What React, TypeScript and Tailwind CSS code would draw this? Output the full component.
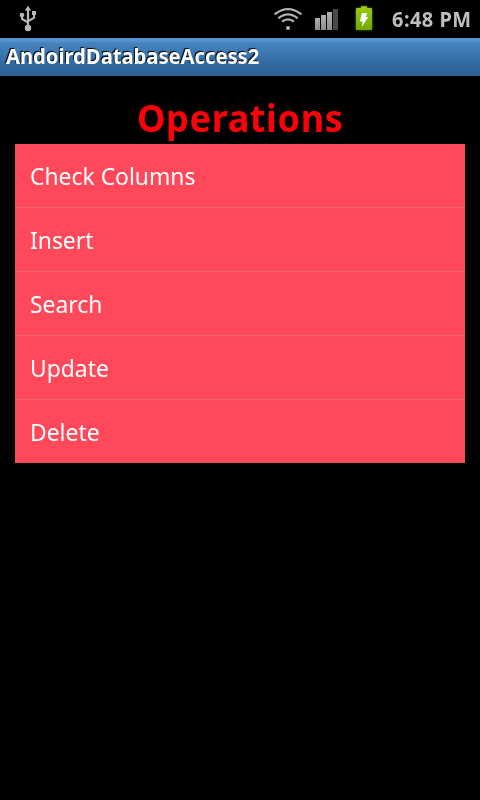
const items = ["Check Columns", "Insert", "Search", "Update", "Delete"];

function UsbIcon() {
  return (
    <svg className="ml-[18px] h-[38px] w-[20px]" viewBox="18 0 20 38" fill="none">
      <path d="M28 5.8L31.3 10.4H29.1V26H26.9V10.4H24.7Z" fill="#b8b8b8" />
      <path d="M22 15V18.8L28 22.4M34 13V17.8L28 21.2" stroke="#b8b8b8" strokeWidth="2.1" />
      <circle cx="22" cy="15" r="2.3" fill="#b8b8b8" />
      <rect x="32" y="11" width="4" height="4" fill="#b8b8b8" />
      <circle cx="28" cy="28" r="3.2" fill="#b8b8b8" />
    </svg>
  );
}

function WifiIcon() {
  return (
    <svg className="h-[38px] w-[30px]" viewBox="273 0 30 38" fill="none" stroke="#b0b0b0">
      <path d="M274.6 14.4Q281 9.1 288 9.1Q295 9.1 301.4 14.4" strokeWidth="2.3" />
      <path d="M278.3 18.3Q283 14.3 288 14.3Q293 14.3 297.7 18.3" strokeWidth="2.3" />
      <path d="M282 21.7Q285 19.3 288 19.3Q291 19.3 294 21.7" strokeWidth="2.3" />
      <circle cx="288" cy="28" r="2" fill="#b8b8b8" stroke="none" />
    </svg>
  );
}

function SignalIcon() {
  return (
    <svg className="ml-[11px] h-[38px] w-[26px]" viewBox="314 0 26 38">
      <defs>
        <linearGradient id="bar" x1="0" y1="0" x2="0" y2="1">
          <stop stopColor="#b2b2b2" />
          <stop offset="1" stopColor="#8c8c8c" />
        </linearGradient>
      </defs>
      <path d="M315 18h5v12h-5z" fill="url(#bar)" />
      <path d="M321 15h5v15h-5z" fill="url(#bar)" />
      <path d="M327 12h5v18h-5z" fill="url(#bar)" />
      <path d="M333 9h5v21h-5z" fill="#484848" />
    </svg>
  );
}

function BatteryIcon() {
  return (
    <svg className="ml-[15px] h-[38px] w-[18px] overflow-visible drop-shadow-[0_0_1px_#5c8a00]" viewBox="355 0 18 38">
      <defs>
        <linearGradient id="battery" x1="0" y1="0" x2="0" y2="1">
          <stop stopColor="#9ccb16" />
          <stop offset="1" stopColor="#71a800" />
        </linearGradient>
      </defs>
      <path d="M361 8V7Q361 6.3 361.7 6.3H366.3Q367 6.3 367 7V8H371Q372 8 372 9V29Q372 30 371 30H357Q356 30 356 29V9Q356 8 357 8Z" fill="url(#battery)" />
      <path d="M362 13H367.3L365.6 17H368.3L361.6 27.3L362.8 21.4H359.8Z" fill="#fff" />
    </svg>
  );
}

export default function App() {
  return (
    <div className="h-[800px] w-[480px] overflow-hidden bg-black font-['Noto_Sans',sans-serif]">
      <div className="flex h-[38px] items-center pr-[9px] text-[#bebebe]">
        <UsbIcon />
        <div className="flex-1" />
        <WifiIcon />
        <SignalIcon />
        <BatteryIcon />
        <span className="ml-[19px] w-[79px] origin-left scale-x-[0.95] text-[21px] leading-[38px] font-bold tracking-[0.5px] whitespace-nowrap">6:48 PM</span>
      </div>
      <header className="flex h-[38px] items-center bg-[linear-gradient(#5897d4_0px,#5592ce_3px,#4684bf_5px,#3169a0_26px,#2d6090_38px)] pl-[6px] text-[21px] font-bold text-white">
        <span className="origin-left scale-x-[0.961] [text-shadow:-1px_-1px_1px_#000]">AndoirdDatabaseAccess2</span>
      </header>
      <main className="px-[15px] pt-[16px]">
        <h1 className="h-[52px] text-center text-[37.5px] leading-[52px] font-bold tracking-[0.6px] text-[#ff0008]">
          <span className="inline-block scale-x-[0.963]">Operations</span>
        </h1>
        <ul>
          {items.map((t) => (
            <li key={t} className="h-[64px] border-b border-[#ec6871] bg-[#ff4859] pl-[15px] text-[24px] leading-[64px] text-white last:h-[63px] last:border-b-0">
              <span className="inline-block origin-left scale-x-[0.953]">{t}</span>
            </li>
          ))}
        </ul>
      </main>
    </div>
  );
}
